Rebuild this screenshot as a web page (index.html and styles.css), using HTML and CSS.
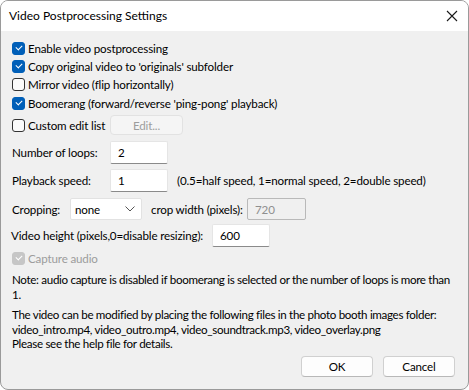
FILE: index.html
```html
<!DOCTYPE html>
<html>
<head>
<meta charset="utf-8">
<link rel="stylesheet" href="styles.css">
</head>
<body>
<div class="window">
  <div class="titlebar">
    <span class="title">Video Postprocessing Settings</span>
    <svg class="close" width="12" height="12" viewBox="0 0 12 12"><path d="M1 1 L11 11 M11 1 L1 11" stroke="#1a1a1a" stroke-width="1.1" fill="none"/></svg>
  </div>
  <div class="content">
    <div class="checks">
      <label class="chk"><span class="box on"></span>Enable video postprocessing</label>
      <label class="chk"><span class="box on"></span>Copy original video to 'originals' subfolder</label>
      <label class="chk"><span class="box"></span>Mirror video (flip horizontally)</label>
      <label class="chk"><span class="box on"></span>Boomerang (forward/reverse 'ping-pong' playback)</label>
    </div>
    <div class="row row-edit">
      <label class="chk wide"><span class="box"></span>Custom edit list</label>
      <span class="btn disabled editbtn">Edit...</span>
    </div>
    <div class="row row-loops">
      <span class="lbl w98">Number of loops:</span>
      <span class="input w58">2</span>
    </div>
    <div class="row row-speed">
      <span class="lbl w98">Playback speed:</span>
      <span class="input w58">1</span>
      <span class="hint">(0.5=half speed, 1=normal speed, 2=double speed)</span>
    </div>
    <div class="row row-crop">
      <span class="lbl w58">Cropping:</span>
      <span class="select">none<svg class="chev" width="10" height="6" viewBox="0 0 10 6"><path d="M0.5 0.5 L5 5 L9.5 0.5" stroke="#555" stroke-width="1" fill="none"/></svg></span>
      <span class="lbl crop-lbl">crop width (pixels):</span>
      <span class="input disabled-input w59">720</span>
    </div>
    <div class="row row-height">
      <span class="lbl vh-lbl">Video height (pixels,0=disable resizing):</span>
      <span class="input w58">600</span>
    </div>
    <div class="row row-audio">
      <label class="chk dis"><span class="box gray"></span>Capture audio</label>
    </div>
    <p class="note">Note: audio capture is disabled if boomerang is selected or the number of loops is more than 1.</p>
    <p class="note note2">The video can be modified by placing the following files in the photo booth images folder:<br>video_intro.mp4, video_outro.mp4, video_soundtrack.mp3, video_overlay.png<br>Please see the help file for details.</p>
    <div class="buttons">
      <span class="btn">OK</span>
      <span class="btn">Cancel</span>
    </div>
  </div>
</div>
</body>
</html>
```
FILE: styles.css
```css
* { box-sizing: border-box; }
html, body { margin: 0; padding: 0; background: #ffffff; }
body {
  font-family: "Lato", "Liberation Sans", sans-serif;
  font-size: 11.6px;
  letter-spacing: -0.15px;
  color: #000;
}
.window {
  width: 469px;
  height: 390px;
  border: 1px solid #9a9a9a;
  border-radius: 8px;
  overflow: hidden;
  background: #f0f0f0;
  display: flex;
  flex-direction: column;
}
.titlebar {
  height: 30px;
  background: #ffffff;
  display: flex;
  align-items: center;
  justify-content: space-between;
  padding: 0 10px 0 8px;
  flex: none;
}
.title { font-size: 12px; line-height: 16px; letter-spacing: 0; }
.close { display: block; }
.content {
  padding: 8px 12px 0 11px;
  display: flex;
  flex-direction: column;
  flex: 1;
}
.checks { display: flex; flex-direction: column; }
.chk {
  display: flex;
  align-items: center;
  height: 18.3px;
  white-space: nowrap;
  flex: none;
}
.box {
  width: 13px;
  height: 13px;
  border: 1px solid #333;
  border-radius: 3px;
  background: #fbfbfb;
  margin-right: 3px;
  flex: none;
  position: relative;
}
.box.on { background: #005fb8; border-color: #005fb8; }
.box.gray { background: #c6c6c6; border-color: #c6c6c6; }
.box.on::after, .box.gray::after {
  content: "";
  position: absolute;
  left: 3px;
  top: 2px;
  width: 5px;
  height: 3px;
  border-left: 1.2px solid #fff;
  border-bottom: 1.2px solid #fff;
  transform: rotate(-45deg);
}
.chk.dis { color: #9c9c9c; }
.row { display: flex; align-items: center; white-space: nowrap; }
.row > * { flex: none; }
.row-edit { margin-top: 3px; height: 20px; }
.wide { width: 98px; }
.btn {
  display: inline-flex;
  align-items: center;
  justify-content: center;
  height: 21px;
  width: 72px;
  border: 1px solid #d0d0d0;
  border-bottom-color: #b8b8b8;
  border-radius: 4px;
  background: #fdfdfd;
}
.btn.disabled { background: #f5f5f5; border-color: #e2e2e2; color: #9d9d9d; }
.editbtn { width: 73px; height: 20px; }
.lbl { display: inline-block; }
.w98 { width: 98px; }
.w58 { width: 58px; }
.w59 { width: 59px; }
.input {
  display: inline-flex;
  align-items: center;
  height: 23px;
  padding-left: 7px;
  background: #fff;
  border: 1px solid #e5e5e5;
  border-bottom-color: #8a8a8a;
  border-radius: 2px;
}
.row-loops { margin-top: 6px; }
.row-speed { margin-top: 5px; }
.hint { margin-left: 9px; }
.row-crop { margin-top: 6px; height: 22px; }
.select {
  display: inline-flex;
  align-items: center;
  justify-content: space-between;
  width: 72px;
  height: 22px;
  padding: 0 6px 0 4px;
  background: #fff;
  border: 1px solid #e2e2e2;
  border-radius: 2px;
}
.chev { display: block; }
.crop-lbl { margin-left: 9px; width: 96px; }
.disabled-input {
  height: 22px;
  background: #f0f0f0;
  border: 1px solid #b9b9b9;
  color: #8f8f8f;
}
.row-height { margin-top: 4px; margin-left: -1px; }
.vh-lbl { width: 201px; }
.row-audio { margin-top: 2px; }
.note {
  margin: 5px 0 0 0;
  line-height: 15px;
  white-space: normal;
  letter-spacing: -0.32px;
}
.note2 { margin-top: 6px; line-height: 14.5px; }
.buttons {
  display: flex;
  justify-content: flex-end;
  gap: 10px;
  margin-top: 4px;
  padding-right: 1px;
}
.buttons .btn { width: 72px; }
```
